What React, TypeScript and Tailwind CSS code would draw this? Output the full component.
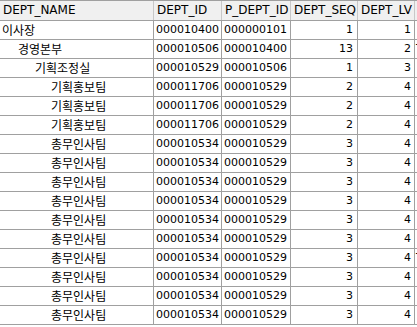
import React from 'react';

const cols = [
  { key: 'name', label: 'DEPT_NAME', w: 'w-[154px]', right: false },
  { key: 'id', label: 'DEPT_ID', w: 'w-[68px]', right: false },
  { key: 'pid', label: 'P_DEPT_ID', w: 'w-[69px]', right: false },
  { key: 'seq', label: 'DEPT_SEQ', w: 'w-[67px]', right: true },
  { key: 'lv', label: 'DEPT_LV', w: 'w-[57px]', right: true },
];

type Row = { name: string; id: string; pid: string; seq: string; lv: number; extra?: string };

const rows: Row[] = [
  { name: '이사장', id: '000010400', pid: '000000101', seq: '1', lv: 1 },
  { name: '경영본부', id: '000010506', pid: '000010400', seq: '13', lv: 2, extra: 'T' },
  { name: '기획조정실', id: '000010529', pid: '000010506', seq: '1', lv: 3 },
  { name: '기획홍보팀', id: '000011706', pid: '000010529', seq: '2', lv: 4 },
  { name: '기획홍보팀', id: '000011706', pid: '000010529', seq: '2', lv: 4 },
  { name: '기획홍보팀', id: '000011706', pid: '000010529', seq: '2', lv: 4 },
  ...Array.from({ length: 10 }, (_, i) => ({
    name: '총무인사팀',
    id: '000010534',
    pid: '000010529',
    seq: '3',
    lv: 4,
    extra: i === 6 ? 'T' : undefined,
  })),
];

const indent: Record<number, string> = {
  1: 'pl-[2px]',
  2: 'pl-[18px]',
  3: 'pl-[35px]',
  4: 'pl-[51px]',
};

export default function App() {
  return (
    <div className="h-[327px] w-[417px] overflow-hidden bg-white text-black" style={{ fontFamily: '"DejaVu Sans", "Noto Sans CJK KR", sans-serif' }}>
      <div className="flex h-[21px] border-t border-b border-[#a0a0a0] bg-[#f0f0f0] text-[12px] leading-[19px]">
        {cols.map((c) => (
          <div key={c.key} className={`${c.w} shrink-0 truncate border-r border-[#c8c8c8] pl-[3px]`}>
            {c.label}
          </div>
        ))}
        <div className="flex-1" />
      </div>
      {rows.map((r, i) => (
        <div key={i} className="flex h-[19px] border-b border-[#a0a0a0] text-[11px] leading-[18px]">
          <div
            className={`w-[154px] shrink-0 border-r border-[#a0a0a0] text-[12px] ${indent[r.lv]}`}
            style={{ fontFamily: '"Noto Sans CJK KR", sans-serif' }}
          >
            {r.name}
          </div>
          <div className="w-[68px] shrink-0 border-r border-[#a0a0a0] pl-[2px]">{r.id}</div>
          <div className="w-[69px] shrink-0 border-r border-[#a0a0a0] pl-[2px]">{r.pid}</div>
          <div className="w-[67px] shrink-0 border-r border-[#a0a0a0] pr-[4px] text-right">{r.seq}</div>
          <div className="w-[57px] shrink-0 border-r border-[#a0a0a0] pr-[3px] text-right">{r.lv}</div>
          <div className="flex-1 overflow-hidden pl-[1px] text-[11px]">{r.extra}</div>
        </div>
      ))}
    </div>
  );
}
